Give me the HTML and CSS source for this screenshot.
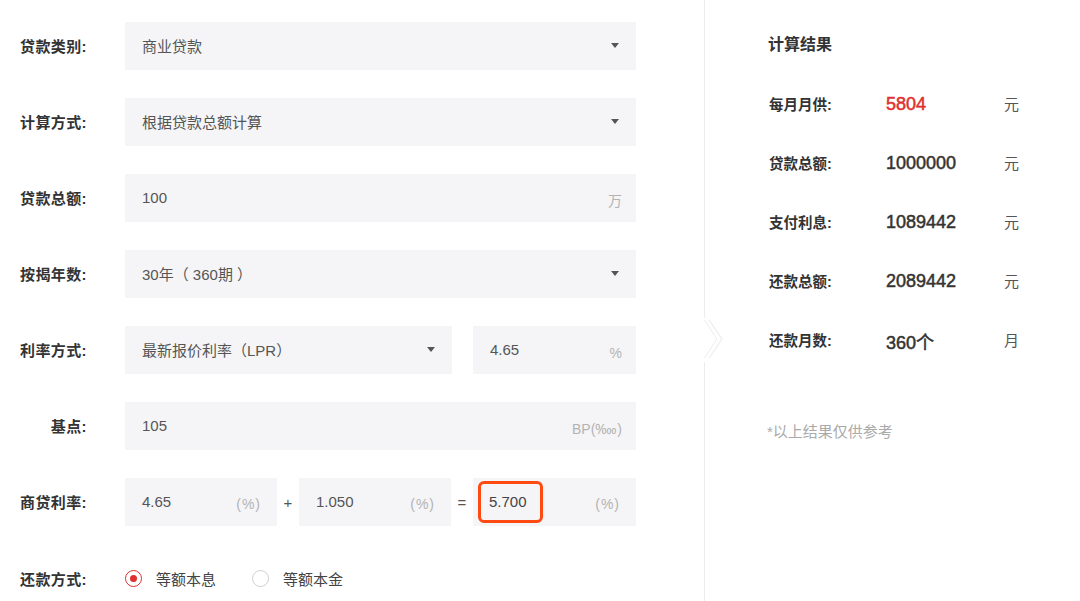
FILE: index.html
```html
<!DOCTYPE html>
<html lang="zh-CN">
<head>
<meta charset="utf-8">
<title>房贷计算器</title>
<link rel="stylesheet" href="styles.css">
</head>
<body>
<div class="page">
  <div class="form">
    <div class="row">
      <div class="label">贷款类别:</div>
      <div class="field select wide"><span class="val">商业贷款</span><span class="caret"></span></div>
    </div>
    <div class="row">
      <div class="label">计算方式:</div>
      <div class="field select wide"><span class="val">根据贷款总额计算</span><span class="caret"></span></div>
    </div>
    <div class="row">
      <div class="label">贷款总额:</div>
      <div class="field wide"><span class="val">100</span><span class="unit">万</span></div>
    </div>
    <div class="row">
      <div class="label">按揭年数:</div>
      <div class="field select wide"><span class="val">30年（ 360期 ）</span><span class="caret"></span></div>
    </div>
    <div class="row">
      <div class="label">利率方式:</div>
      <div class="field select lpr"><span class="val">最新报价利率（LPR）</span><span class="caret"></span></div>
      <div class="field rate"><span class="val">4.65</span><span class="unit pct">%</span></div>
    </div>
    <div class="row">
      <div class="label">基点:</div>
      <div class="field wide"><span class="val">105</span><span class="unit">BP(‱)</span></div>
    </div>
    <div class="row">
      <div class="label">商贷利率:</div>
      <div class="field small"><span class="val">4.65</span><span class="unit pu">(%)</span></div>
      <span class="op">+</span>
      <div class="field small"><span class="val">1.050</span><span class="unit pu">(%)</span></div>
      <span class="op">=</span>
      <div class="field small last"><span class="val boxed">5.700</span><span class="unit pu">(%)</span></div>
    </div>
    <div class="row radios">
      <div class="label">还款方式:</div>
      <label class="radio on"><span class="dot"></span>等额本息</label>
      <label class="radio"><span class="dot"></span>等额本金</label>
    </div>
  </div>
  <div class="result">
    <svg class="chev" width="30" height="44" viewBox="0 0 30 44">
      <rect x="0" y="0" width="3" height="44" fill="#fff"/>
      <polyline points="0.5,2 13,21 0.5,40" fill="none" stroke="#ececec" stroke-width="1"/>
      <polyline points="5,2 18,21 5,40" fill="none" stroke="#f1f1f1" stroke-width="1.5"/>
    </svg>
    <div class="title">计算结果</div>
    <div class="rlist">
      <div class="rrow"><span class="rl">每月月供:</span><span class="rv red">5804</span><span class="ru">元</span></div>
      <div class="rrow"><span class="rl">贷款总额:</span><span class="rv">1000000</span><span class="ru">元</span></div>
      <div class="rrow"><span class="rl">支付利息:</span><span class="rv">1089442</span><span class="ru">元</span></div>
      <div class="rrow"><span class="rl">还款总额:</span><span class="rv">2089442</span><span class="ru">元</span></div>
      <div class="rrow"><span class="rl">还款月数:</span><span class="rv">360个</span><span class="ru">月</span></div>
    </div>
    <div class="note">*以上结果仅供参考</div>
  </div>
</div>
</body>
</html>
```

FILE: styles.css
```css
* { box-sizing: border-box; }
html, body { margin: 0; padding: 0; background: #fff; }
body {
  font-family: "Liberation Sans", "Noto Sans CJK SC", sans-serif;
  color: #333;
  width: 1080px;
  height: 601px;
  overflow: hidden;
}
.page {
  display: flex;
  height: 601px;
}
.form {
  width: 704px;
  padding-top: 22px;
  display: flex;
  flex-direction: column;
  gap: 28px;
}
.row {
  display: flex;
  align-items: center;
  height: 48px;
}
.label {
  width: 87px;
  text-align: right;
  margin-right: 38px;
  font-size: 15px;
  font-weight: bold;
  color: #333;
  letter-spacing: 0.4px;
  position: relative;
  top: -1px;
}
.field {
  height: 48px;
  background: #f5f5f7;
  display: flex;
  align-items: center;
  justify-content: space-between;
  padding: 0 14px 0 17px;
  font-size: 15px;
  color: #555;
}
.wide { width: 511px; }
.lpr { width: 327px; margin-right: 21px; }
.rate { width: 163px; }
.small { width: 152px; }
.small.last { width: 163px; padding-left: 5px; }
.val { white-space: pre; position: relative; top: -1px; }
.unit {
  color: #b3b3b3;
  font-size: 14px;
  position: relative;
  top: 2px;
}
.unit.pct { top: 3px; }
.unit.pu { letter-spacing: 1px; margin-right: 2px; }
.caret {
  width: 0; height: 0;
  border-left: 4px solid transparent;
  border-right: 4px solid transparent;
  border-top: 5px solid #555;
  margin-right: 3px;
  position: relative;
  top: -1px;
}
.op {
  width: 22px;
  text-align: center;
  font-size: 15px;
  color: #555;
}
.boxed {
  border: 3px solid #ff4a12;
  border-radius: 6px;
  padding: 9px 13px 10px 8px;
  font-size: 15px;
  color: #444;
  top: 0;
}
.radios { height: 48px; margin-top: 4px; }
.radio {
  display: flex;
  align-items: center;
  font-size: 15px;
  color: #444;
  margin-right: 36px;
  position: relative;
  top: -1px;
}
.dot {
  width: 17px; height: 17px;
  border-radius: 50%;
  border: 1.5px solid #d0d0d0;
  margin-right: 14px;
  display: flex;
  align-items: center;
  justify-content: center;
}
.radio.on .dot { border-color: #e0302f; }
.radio.on .dot::after {
  content: "";
  width: 7px; height: 7px;
  border-radius: 50%;
  background: #e0302f;
}
.result {
  position: relative;
  flex: 1;
  border-left: 1px solid #ededed;
  padding: 22px 0 0 63px;
}
.chev {
  position: absolute;
  left: -1px;
  top: 318px;
}
.title {
  height: 48px;
  line-height: 46px;
  font-size: 16px;
  font-weight: bold;
  color: #333;
}
.rlist { margin-top: 5px; }
.rrow {
  height: 59px;
  display: flex;
  align-items: center;
}
.rl {
  width: 117px;
  font-size: 14.5px;
  font-weight: bold;
  color: #333;
  padding-left: 1px;
  position: relative;
  top: -1px;
}
.rv {
  width: 119px;
  font-size: 18px;
  font-weight: normal;
  -webkit-text-stroke: 0.5px #333;
  color: #333;
  padding-left: 1px;
}
.rv.red { color: #e0302f; -webkit-text-stroke: 0.5px #e0302f; }
.ru { font-size: 15px; color: #555; position: relative; top: -1px; }
.note {
  margin-top: 52px;
  line-height: 20px;
  font-size: 15px;
  color: #aaa;
  margin-left: -1px;
}
```
